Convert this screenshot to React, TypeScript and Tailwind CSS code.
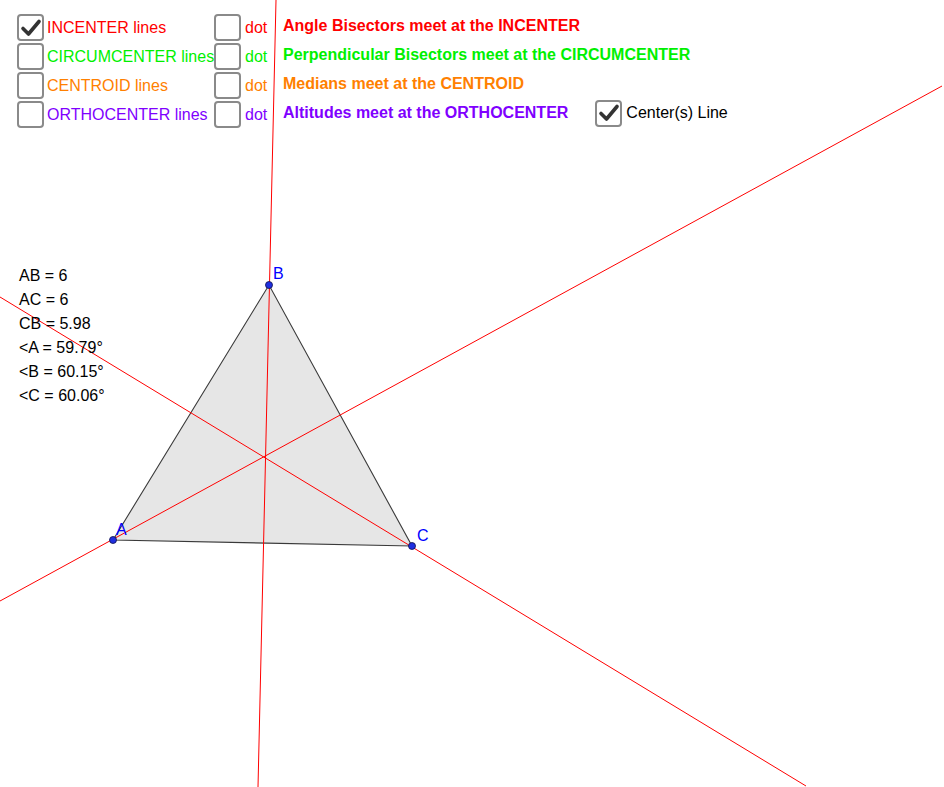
const ROWS = [
  { label: 'INCENTER lines', color: 'text-[#ff0000]', checked: true, note: 'Angle Bisectors meet at the INCENTER' },
  { label: 'CIRCUMCENTER lines', color: 'text-[#00f000]', checked: false, note: 'Perpendicular Bisectors meet at the CIRCUMCENTER' },
  { label: 'CENTROID lines', color: 'text-[#ff8000]', checked: false, note: 'Medians meet at the CENTROID' },
  { label: 'ORTHOCENTER lines', color: 'text-[#8000ff]', checked: false, note: 'Altitudes meet at the ORTHOCENTER' },
];

const STATS = ['AB = 6', 'AC = 6', 'CB = 5.98', '<A = 59.79°', '<B = 60.15°', '<C = 60.06°'];

function Box({ checked }: { checked: boolean }) {
  return (
    <div className="w-[27px] h-[27px] shrink-0 rounded-[4px] border-2 border-[#8a8a8a] bg-white flex items-center justify-center">
      {checked && (
        <svg width="22" height="22" viewBox="0 0 22 22">
          <path d="M3 11.5 L8.5 17 L19 4.5" fill="none" stroke="#333" strokeWidth="3.6" strokeLinecap="round" strokeLinejoin="round" />
        </svg>
      )}
    </div>
  );
}

function Construction() {
  return (
    <svg className="absolute inset-0" width="944" height="787" viewBox="0 0 944 787">
      <polygon points="113,540 269,285 412,546" fill="#e6e6e6" stroke="#3a3a3a" strokeWidth="1.1" />
      <line x1="276" y1="0" x2="258" y2="787" stroke="#ff0000" strokeWidth="1" />
      <line x1="0" y1="601" x2="942" y2="86" stroke="#ff0000" strokeWidth="1" />
      <line x1="0" y1="297" x2="806" y2="786" stroke="#ff0000" strokeWidth="1" />
      {[
        [113, 540],
        [269, 285],
        [412, 546],
      ].map(([x, y]) => (
        <circle key={x} cx={x} cy={y} r="3.5" fill="#1f2fe0" stroke="#10104a" strokeWidth="0.8" />
      ))}
      <g fill="#0000ff" fontSize="16" fontFamily="'Liberation Sans', Arial, sans-serif">
        <text x="116" y="535">A</text>
        <text x="273" y="279">B</text>
        <text x="417" y="541">C</text>
      </g>
    </svg>
  );
}

export default function App() {
  return (
    <div className="relative w-[944px] h-[787px] bg-white overflow-hidden font-['Liberation_Sans',Arial,sans-serif] text-[16px]">
      <Construction />
      <div className="relative pt-[14px] pl-[17px] flex flex-col gap-[2px]">
        {ROWS.map((r, i) => (
          <div key={r.label} className="flex items-center h-[27px]">
            <div className="w-[197px] flex items-center gap-[3px]">
              <Box checked={r.checked} />
              <span className={`${r.color} whitespace-nowrap`}>{r.label}</span>
            </div>
            <Box checked={false} />
            <span className={`${r.color} ml-[4px] w-[38px]`}>dot</span>
            <span className={`${r.color} font-bold pb-[4px] whitespace-nowrap`}>{r.note}</span>
            {i === 3 && (
              <div className="ml-[27px] flex items-center gap-[4px] -mt-[3px]">
                <Box checked={true} />
                <span className="text-black whitespace-nowrap">Center(s) Line</span>
              </div>
            )}
          </div>
        ))}
      </div>
      <div className="relative mt-[136px] pl-[19px] flex flex-col text-black leading-[24px]">
        {STATS.map((s) => (
          <span key={s}>{s}</span>
        ))}
      </div>
    </div>
  );
}
